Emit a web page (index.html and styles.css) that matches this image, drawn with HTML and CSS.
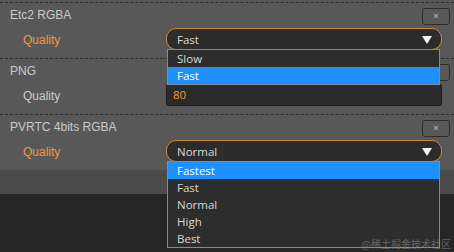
FILE: index.html
```html
<!DOCTYPE html>
<html>
<head>
<meta charset="utf-8">
<link rel="stylesheet" href="styles.css">
</head>
<body>
<div class="panel">
  <div class="section">
    <div class="head"><span class="title">Etc2 RGBA</span><span class="xbtn">×</span></div>
    <div class="row">
      <span class="label active">Quality</span>
      <div class="select">
        <span class="value">Fast</span><span class="arrow"></span>
        <ul class="list short">
          <li>Slow</li>
          <li class="sel">Fast</li>
        </ul>
      </div>
    </div>
  </div>
  <div class="section">
    <div class="head"><span class="title">PNG</span><span class="xbtn">×</span></div>
    <div class="row">
      <span class="label">Quality</span>
      <div class="input">80</div>
    </div>
  </div>
  <div class="section">
    <div class="head"><span class="title">PVRTC 4bits RGBA</span><span class="xbtn">×</span></div>
    <div class="row">
      <span class="label active">Quality</span>
      <div class="select">
        <span class="value">Normal</span><span class="arrow"></span>
        <ul class="list">
          <li class="sel">Fastest</li>
          <li>Fast</li>
          <li>Normal</li>
          <li>High</li>
          <li>Best</li>
        </ul>
      </div>
    </div>
  </div>
</div>
<div class="band"></div>
<div class="watermark">@稀土掘金技术社区</div>
</body>
</html>
```

FILE: styles.css
```css
* { box-sizing: border-box; }
html, body { margin: 0; padding: 0; }
body {
  width: 454px;
  height: 252px;
  background: #262626;
  font-family: "Liberation Sans", Arial, sans-serif;
  overflow: hidden;
  position: relative;
}
.panel {
  background: #585858;
  padding-top: 2px;
}
.section {
  border-top: 1px dashed #303030;
  padding-bottom: 5px;
  height: 56px;
}
.head {
  display: flex;
  justify-content: space-between;
  align-items: flex-start;
  padding: 5px 4px 0 10px;
  height: 22px;
}
.title {
  color: #c9c9c9;
  font-size: 12px;
  line-height: 15px;
}
.xbtn {
  width: 28px;
  height: 17px;
  border: 1px solid #2c2c2c;
  border-radius: 3px;
  color: #c4c4c4;
  font-size: 9px;
  line-height: 15px;
  text-align: center;
}
.row {
  display: flex;
  align-items: center;
  height: 22px;
  margin-top: 3px;
}
.label {
  width: 166px;
  padding-left: 23px;
  color: #cccccc;
  font-size: 12px;
  line-height: 22px;
  padding-top: 2px;
}
.label.active { color: #f19a3e; }
.select {
  position: relative;
  width: 276px;
  height: 22px;
  background: #2c2c2c;
  border: 1px solid #c98a3e;
  border-radius: 10px;
  display: flex;
  align-items: center;
  justify-content: space-between;
  padding: 0 9px 0 10px;
  font-family: "Open Sans", "Noto Sans", sans-serif;
  font-size: 11.5px;
  color: #dcdcdc;
}
.arrow {
  width: 0;
  height: 0;
  border-left: 5px solid transparent;
  border-right: 5px solid transparent;
  border-top: 8px solid #f2f2f2;
  margin-top: 1px;
}
.list {
  position: absolute;
  z-index: 10;
  top: 20px;
  left: 0;
  width: 273px;
  margin: 0;
  padding: 0;
  list-style: none;
  background: #2d2d2d;
  border: 1px solid #8a8a8a;
}
.list li {
  height: 17px;
  line-height: 17px;
  padding-left: 9px;
  color: #d8d8d8;
  font-size: 11.5px;
}
.list li.sel {
  background: #1e8fff;
  color: #ffffff;
}
.input {
  width: 276px;
  height: 22px;
  background: #2a2a2a;
  border: 1px solid #1e1e1e;
  border-radius: 2px;
  color: #f0993c;
  font-family: "Open Sans", "Noto Sans", sans-serif;
  font-size: 11.5px;
  line-height: 20px;
  padding-left: 6px;
}
.band {
  height: 24px;
  background: #4b4b4b;
}
.watermark {
  position: absolute;
  right: 3px;
  bottom: 1px;
  font-family: "Noto Sans CJK SC", sans-serif;
  font-size: 10px;
  color: rgba(150, 150, 150, 0.55);
  z-index: 20;
}
```
